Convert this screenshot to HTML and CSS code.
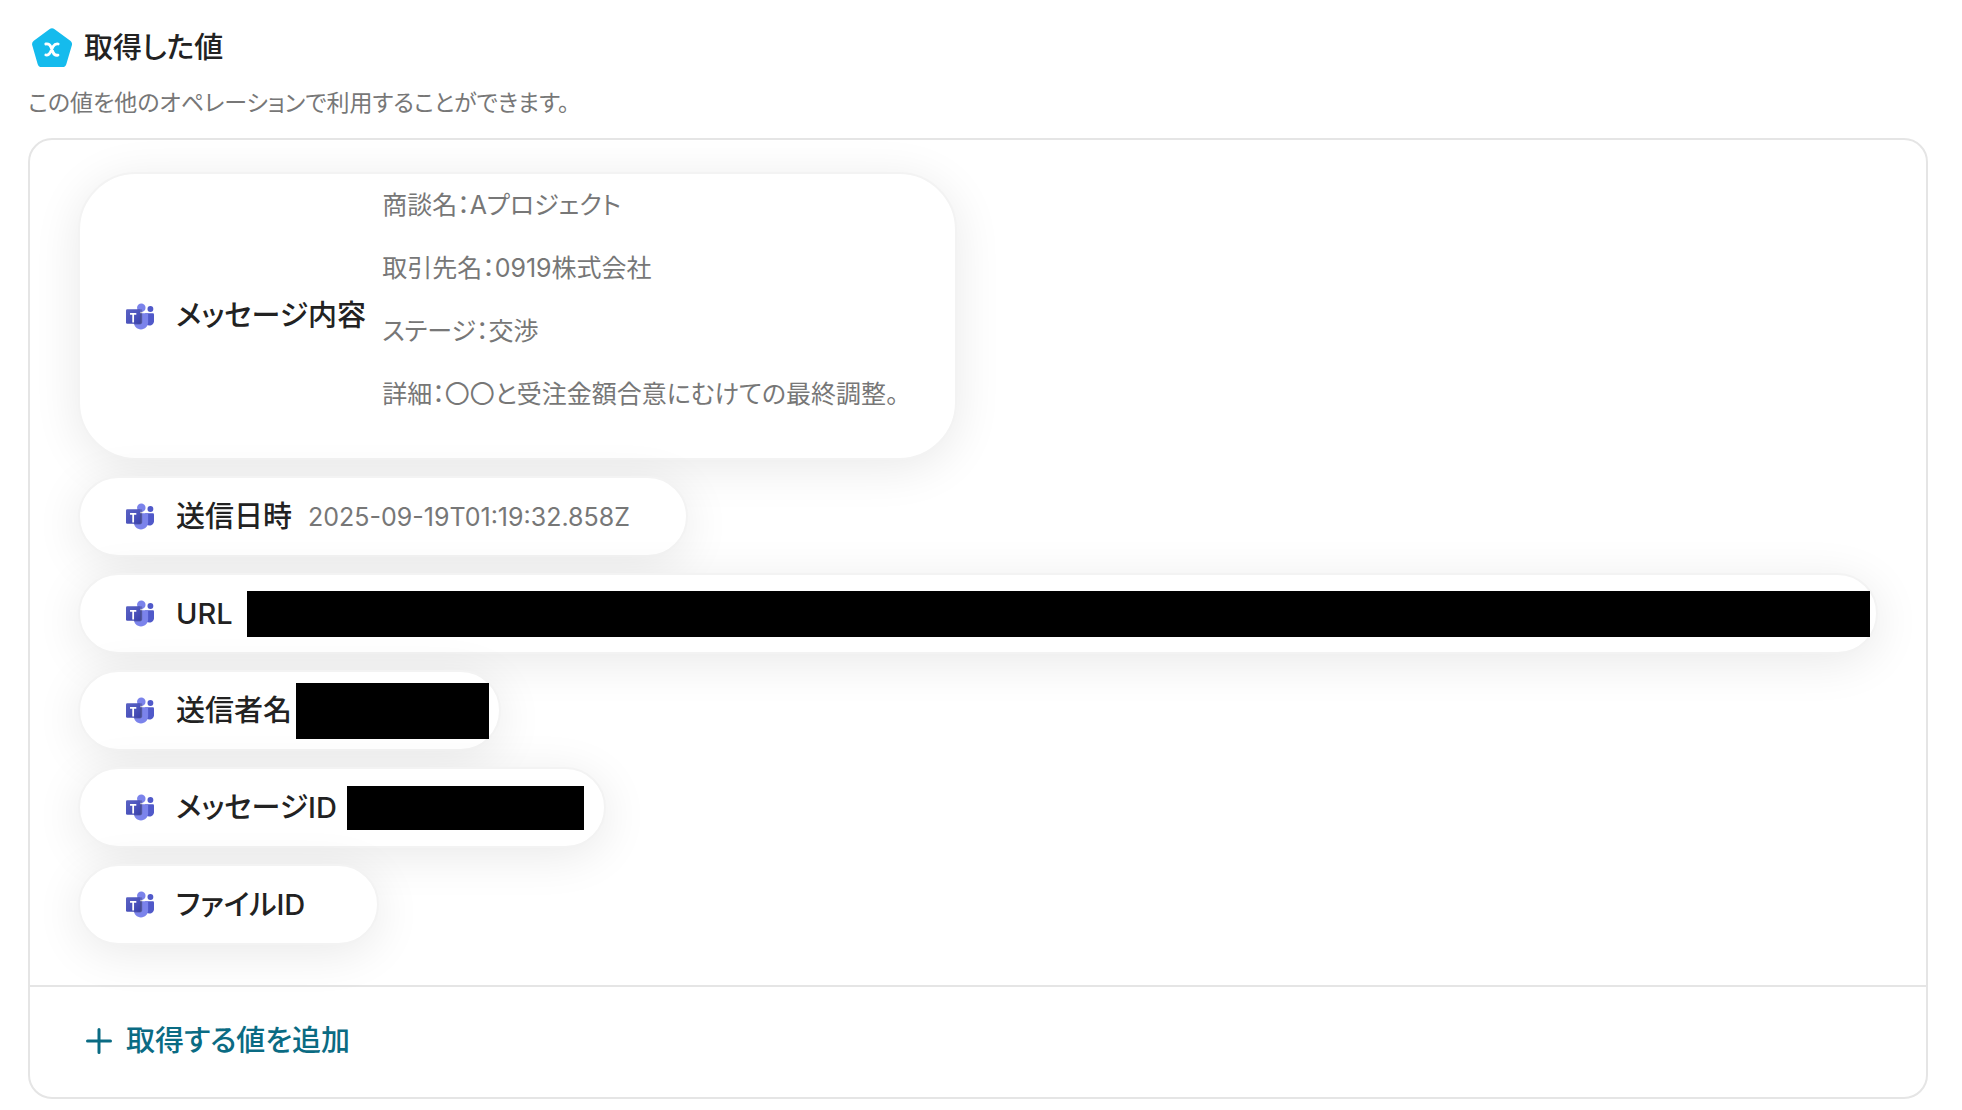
FILE: index.html
```html
<!DOCTYPE html>
<html lang="ja">
<head>
    <meta charset="UTF-8">
    <meta name="viewport" content="width=device-width, initial-scale=1.0">
    <title>取得した値</title>
    <link rel="stylesheet" href="styles.css">
</head>
<body>

    <!-- Teams icon, reused by every row -->
    <svg class="sprite" aria-hidden="true">
        <defs>
            <linearGradient id="teams-tile" x1="0" y1="0" x2="1" y2="1">
                <stop offset="0" stop-color="#5a62c3"/>
                <stop offset="0.5" stop-color="#4d55bd"/>
                <stop offset="1" stop-color="#3940ab"/>
            </linearGradient>
        </defs>
        <symbol id="teams" viewBox="0 0 2229 2073">
            <path fill="#5059c9" d="M1555 777h576c54 0 98 44 98 98v525c0 200-162 362-362 362h-2c-200 0-362-162-362-362V829c0-29 23-52 52-52z"/>
            <circle fill="#5059c9" cx="1943" cy="440" r="233"/>
            <circle fill="#7b83eb" cx="1218" cy="337" r="337"/>
            <path fill="#7b83eb" d="M1667 777H717c-54 1-96 46-95 100v598c-8 322 247 590 570 598 323-8 578-276 570-598V877c1-54-41-99-95-100z"/>
            <path opacity="0.25" d="M622 777h622v780c0 65-53 118-118 118H667c-30-64-45-130-45-200z"/>
            <path opacity="0.2" d="M900 466h292c65 0 104 40 104 104v933c0 64-40 104-104 104H900z"/>
            <rect fill="url(#teams-tile)" y="466" width="1140" height="1140" rx="95"/>
            <path fill="#fff" d="M820 900H640v621H500V900H320V760h500z"/>
        </symbol>
    </svg>

    <main class="output">
        <h1 class="output-title">
            <svg class="output-icon" viewBox="0 0 40 40" aria-hidden="true">
                <path fill="#15bbed" d="M17.4 1.3q2.6-2 5.2 0L38.3 12.8q2.4 1.8 1.5 4.7L34.3 36.2q-.9 2.900-4 2.900H9.7q-3.100 0-4-2.900L.3 17.500q-.9-2.900 1.500-4.700z"/>
                <path fill="none" stroke="#fff" stroke-width="2.800" stroke-linecap="round" d="M13.800 16c2.800-.5 4.200.6 5.100 3l2.200 5.400c.9 2.300 2.300 3.300 4.900 2.700M26.200 16c-2.300-.5-3.800.5-5.100 2.500l-2.600 5.500c-1.200 2.400-2.300 3.500-4.700 3"/>
            </svg>
            取得した値
        </h1>
        <p class="output-note">この値を他のオペレーションで利用することができます。</p>

        <section class="card">
            <ul class="pill-list">
                <li class="pill">
                    <svg class="pill-icon" aria-hidden="true"><use href="#teams"/></svg>
                    <span class="pill-label">メッセージ内容</span>
                    <div class="pill-value pill-message">
                        <p>商談名：Aプロジェクト</p>
                        <p>取引先名：0919株式会社</p>
                        <p>ステージ：交渉</p>
                        <p>詳細：〇〇と受注金額合意にむけての最終調整。</p>
                    </div>
                </li>
                <li class="pill">
                    <svg class="pill-icon" aria-hidden="true"><use href="#teams"/></svg>
                    <span class="pill-label">送信日時</span>
                    <span class="pill-value">2025-09-19T01:19:32.858Z</span>
                </li>
                <li class="pill pill-url">
                    <svg class="pill-icon" aria-hidden="true"><use href="#teams"/></svg>
                    <span class="pill-label">URL</span>
                    <span class="masked masked-url"></span>
                </li>
                <li class="pill pill-sender">
                    <svg class="pill-icon" aria-hidden="true"><use href="#teams"/></svg>
                    <span class="pill-label">送信者名</span>
                    <span class="masked masked-sender"></span>
                </li>
                <li class="pill pill-message-id">
                    <svg class="pill-icon" aria-hidden="true"><use href="#teams"/></svg>
                    <span class="pill-label">メッセージID</span>
                    <span class="masked masked-message-id"></span>
                </li>
                <li class="pill">
                    <svg class="pill-icon" aria-hidden="true"><use href="#teams"/></svg>
                    <span class="pill-label">ファイルID</span>
                    <span class="pill-value"></span>
                </li>
            </ul>
            <div class="card-footer">
                <button type="button" class="btn-add">
                    <svg class="btn-add-icon" viewBox="0 0 26 26" aria-hidden="true">
                        <path d="M13 1.500v23M1.500 13h23"/>
                    </svg>
                    取得する値を追加
                </button>
            </div>
        </section>
    </main>

</body>
</html>
```
FILE: styles.css
```css
* { box-sizing: border-box; }
body { margin: 0; background: #fff; color: #222; font-family: Inter, "Noto Sans CJK JP", sans-serif; font-feature-settings: "palt"; }
.sprite { position: absolute; width: 0; height: 0; }

.output { padding: 24px 34px 12px 28px; }
.output-title { display: flex; align-items: center; gap: 12px; margin: 0; padding-left: 4px; font-size: 29px; font-weight: 500; line-height: 48px; }
.output-icon { width: 40px; height: 40px; }
.output-note { margin: 14px 0 18px; color: #777; font-size: 23px; line-height: 34px; }

.card { border: 2px solid #e5e5e5; border-radius: 24px; }
.pill-list { display: flex; flex-direction: column; align-items: flex-start; gap: 16px; margin: 0; padding: 32px 48px 40px; list-style: none; }
.pill { display: flex; align-items: center; max-width: 100%; min-height: 81px; padding: 10px 56px 10px 46px; background: #fff; border: 2px solid #f3f3f3; border-radius: 58px; box-shadow: 0 8px 48px rgba(0, 0, 0, 0.09); }
.pill-icon { flex: none; width: 28px; height: 27px; margin-right: 22px; }
.pill-label { flex: none; margin-right: 16px; font-size: 29px; font-weight: 500; line-height: 40px; }
.pill-value { color: #777; font-size: 25px; line-height: 38px; }
.pill-message { padding: 2px 0 10px; }
.pill-message p { margin: 0 0 25px; }

/* masked values */
.masked { height: 46px; background: #000; }
.pill-url { width: 100%; padding-right: 6px; }
.pill-url .pill-label { margin-right: 14px; }
.masked-url { flex: 1; }
.pill-sender { padding-right: 10px; }
.pill-sender .pill-label { margin-right: 4px; }
.masked-sender { width: 193px; height: 56px; }
.pill-message-id { padding-right: 20px; }
.pill-message-id .pill-label { margin-right: 10px; }
.masked-message-id { width: 237px; height: 44px; }

.card-footer { padding: 30px 56px 33px; border-top: 2px solid #e5e5e5; }
.btn-add { display: flex; align-items: center; gap: 14px; padding: 0; background: none; border: none; color: #0a6b83; font: inherit; font-feature-settings: "palt"; font-size: 29px; font-weight: 500; line-height: 47px; cursor: pointer; }
.btn-add-icon { width: 26px; height: 26px; fill: none; stroke: #0a6b83; stroke-width: 3; stroke-linecap: round; }
```
